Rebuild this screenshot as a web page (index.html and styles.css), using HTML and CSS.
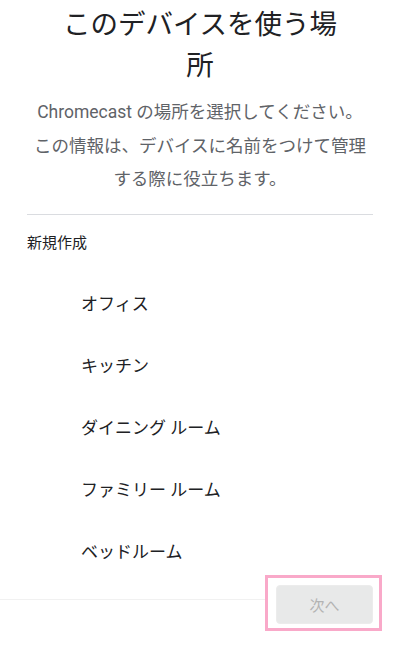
FILE: index.html
```html
<!DOCTYPE html>
<html lang="ja">
<head>
    <meta charset="UTF-8">
    <title>デバイスの場所</title>
    <meta name="viewport" content="width=device-width, initial-scale=1">
    <link rel="stylesheet" href="styles.css">
</head>
<body>
    <div id="container">
        <h1 class="title">このデバイスを使う場所</h1>
        <p class="lead">Chromecast の場所を選択してください。<br>この情報は、デバイスに名前をつけて管理する際に役立ちます。</p>

        <hr class="divider">

        <div class="section-label">新規作成</div>
        <ul class="room-list">
            <li>オフィス</li>
            <li>キッチン</li>
            <li>ダイニング ルーム</li>
            <li>ファミリー ルーム</li>
            <li>ベッドルーム</li>
        </ul>

        <div class="footer">
            <div class="footer-rule"></div>
            <div class="highlight">
                <button class="next-button" type="button" disabled>次へ</button>
            </div>
        </div>
    </div>
</body>
</html>
```

FILE: styles.css
```css
body, html {
    margin: 0;
    padding: 0;
    font-family: Roboto, "Noto Sans CJK JP", sans-serif;
    background-color: #fff;
    color: #202124;
}

#container {
    width: 400px;
    height: 650px;
    overflow: hidden;
    box-sizing: border-box;
    padding-top: 4px;
}

.title {
    width: 282px;
    margin: 0 auto;
    font-size: 27.5px;
    font-weight: 400;
    line-height: 41px;
    text-align: center;
}

.lead {
    margin: 10px 27px 0;
    font-size: 17.5px;
    line-height: 33.5px;
    color: #5f6368;
    text-align: center;
}

.divider {
    margin: 17px 27px 0;
    border: 0;
    height: 1px;
    background-color: #dadce0;
}

.section-label {
    margin: 18px 27px 0;
    font-size: 15px;
    line-height: 20px;
}

.room-list {
    list-style: none;
    margin: 39px 0 0;
    padding: 0 0 0 81px;
    display: flex;
    flex-direction: column;
    gap: 38px;
}

.room-list li {
    font-size: 17px;
    line-height: 24px;
}

.footer {
    display: flex;
    align-items: flex-start;
    margin-top: 11px;
    padding-right: 18px;
}

.footer-rule {
    flex: 1;
    height: 1px;
    margin-top: 24px;
    background-color: #f1f1f1;
}

.highlight {
    border: 3px solid #f9a9c9;
    padding: 7px 6px 4px 8px;
}

.next-button {
    display: block;
    width: 97px;
    height: 39px;
    border: 1px solid #ececec;
    border-radius: 4px;
    background-color: #e8e9e9;
    color: #b3b3b3;
    font-family: Roboto, "Noto Sans CJK JP", sans-serif;
    font-size: 15px;
}
```
